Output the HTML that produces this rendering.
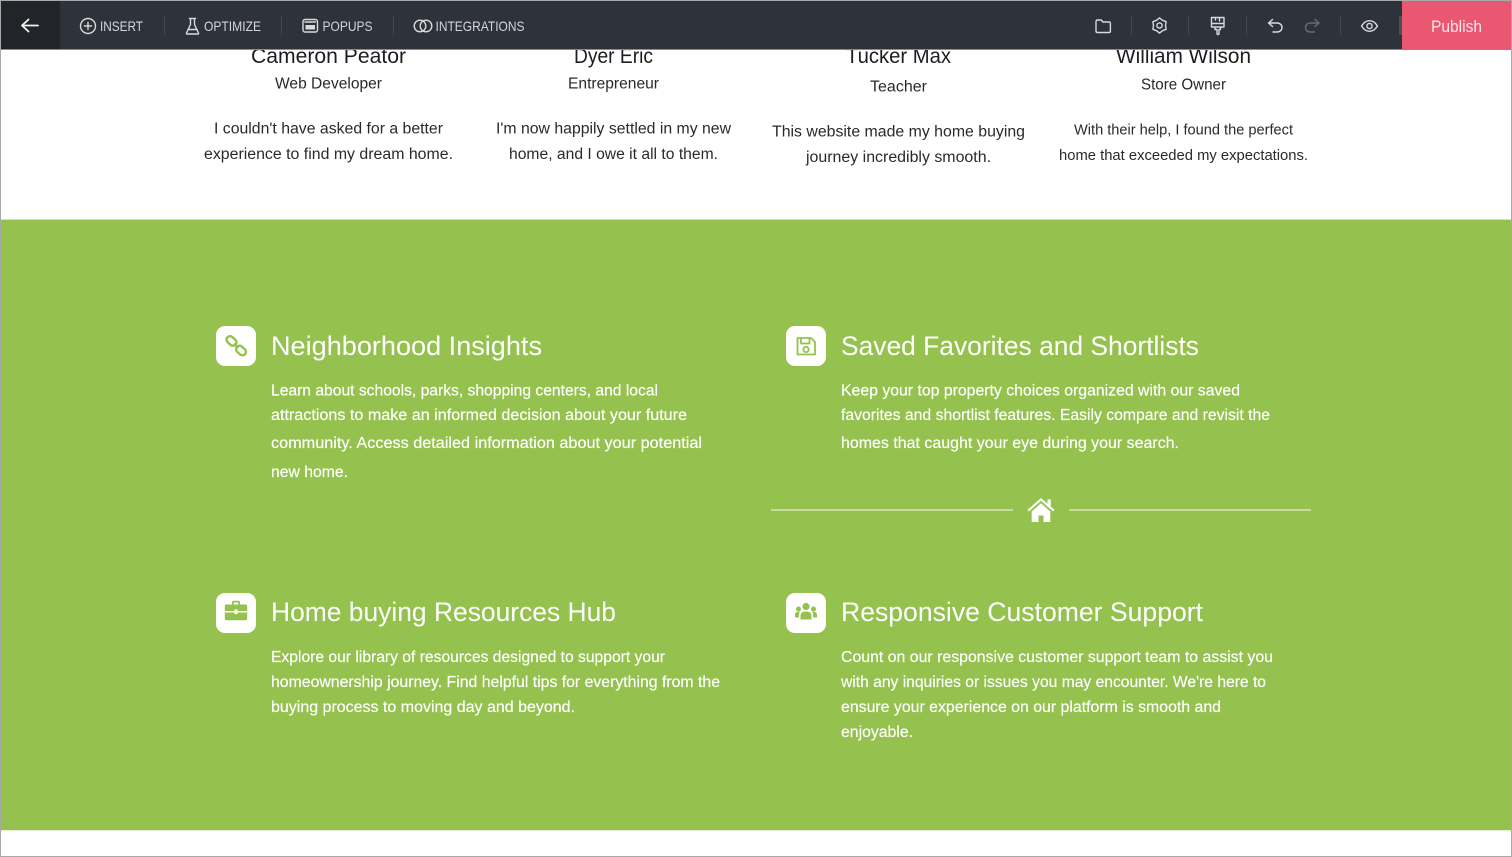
<!DOCTYPE html>
<html><head><meta charset="utf-8"><title>Page editor</title>
<style>
html,body{margin:0;padding:0;background:#fff;width:1512px;height:857px;overflow:hidden}
svg{display:block}
text{font-family:"Liberation Sans",sans-serif}
.n{font-size:21px;fill:#1d1d1f}
.r{font-size:15.5px;fill:#2a2a2a}
.q{font-size:15.5px;fill:#2a2a2a}
.h{font-size:26.5px;fill:#fff}
.b{font-size:15.5px;fill:#fff;stroke:#fff;stroke-width:.15}
.t{font-size:14px;fill:#d4d6d9}
.i{fill:none;stroke:#d8dadd;stroke-width:1.4;stroke-linecap:round;stroke-linejoin:round}
.g{fill:none;stroke:#95c24f;stroke-width:1.8;stroke-linecap:round;stroke-linejoin:round}
</style></head><body>
<svg width="1512" height="857" viewBox="0 0 1512 857" xmlns="http://www.w3.org/2000/svg">
<rect width="1512" height="857" fill="#fff"/>

<!-- testimonials -->
<text class="n" x="251" y="63" textLength="155" lengthAdjust="spacingAndGlyphs">Cameron Peator</text>
<text class="n" x="574" y="63" textLength="79" lengthAdjust="spacingAndGlyphs">Dyer Eric</text>
<text class="n" x="846" y="63" textLength="105" lengthAdjust="spacingAndGlyphs">Tucker Max</text>
<text class="n" x="1116" y="63" textLength="135" lengthAdjust="spacingAndGlyphs">William Wilson</text>
<text class="r" x="275" y="88.500" textLength="107" lengthAdjust="spacingAndGlyphs">Web Developer</text>
<text class="r" x="568" y="88.500" textLength="91" lengthAdjust="spacingAndGlyphs">Entrepreneur</text>
<text class="r" x="870" y="91.300" textLength="57" lengthAdjust="spacingAndGlyphs">Teacher</text>
<text class="r" x="1141" y="89.300" textLength="85" lengthAdjust="spacingAndGlyphs">Store Owner</text>
<text class="q" x="214" y="133.600" textLength="229" lengthAdjust="spacingAndGlyphs">I couldn't have asked for a better</text>
<text class="q" x="204" y="158.800" textLength="249" lengthAdjust="spacingAndGlyphs">experience to find my dream home.</text>
<text class="q" x="496" y="133.600" textLength="235" lengthAdjust="spacingAndGlyphs">I'm now happily settled in my new</text>
<text class="q" x="509" y="158.800" textLength="209" lengthAdjust="spacingAndGlyphs">home, and I owe it all to them.</text>
<text class="q" x="772" y="136.300" textLength="253" lengthAdjust="spacingAndGlyphs">This website made my home buying</text>
<text class="q" x="806" y="161.800" textLength="185" lengthAdjust="spacingAndGlyphs">journey incredibly smooth.</text>
<text class="q" x="1074" y="134.300" textLength="219" lengthAdjust="spacingAndGlyphs" style="font-size:14.6px">With their help, I found the perfect</text>
<text class="q" x="1059" y="159.800" textLength="249" lengthAdjust="spacingAndGlyphs" style="font-size:14.6px">home that exceeded my expectations.</text>

<!-- green band -->
<rect x="0" y="219" width="1512" height="1" fill="#d9d9d9"/>
<rect x="0" y="220" width="1512" height="610" fill="#95c24f"/>
<rect x="0" y="830" width="1512" height="1" fill="#e6f0d4"/>

<!-- icon tiles -->
<rect x="216" y="326" width="40" height="40" rx="9" fill="#fff"/>
<rect x="786" y="326" width="40" height="40" rx="9" fill="#fff"/>
<rect x="216" y="593" width="40" height="40" rx="9" fill="#fff"/>
<rect x="786" y="593" width="40" height="40" rx="9" fill="#fff"/>

<!-- link icon -->
<g fill="none" stroke="#95c24f" stroke-width="2.4">
<rect x="226" y="337.500" width="11" height="7" rx="3.500" transform="rotate(42 231.500 341)"/>
<rect x="235.500" y="347" width="11" height="7" rx="3.500" transform="rotate(42 241 350.500)"/>
</g>
<path d="M234 343.500l4.500 4.500" stroke="#95c24f" stroke-width="2" fill="none"/>

<!-- floppy icon -->
<path class="g" d="M797.500 338h13.500l4 4v12.500h-17.500z"/>
<path class="g" d="M801 338v5.500h8.500v-5.500"/>
<circle class="g" cx="806" cy="349.500" r="2.700"/>

<!-- briefcase -->
<path fill="#95c24f" d="M232 604.500v-2.200c0-.9.700-1.500 1.500-1.500h5c.9 0 1.500.6 1.500 1.500v2.200h5.500c1 0 1.700.7 1.700 1.700v4.800h-9.700v-1.600h-3v1.600h-9.700v-4.800c0-1 .7-1.700 1.700-1.700zm1.700 0h4.600v-2h-4.600zM224.800 612.500h9.700v1.600h3v-1.600h9.700v6c0 1-.7 1.700-1.700 1.700h-19c-1 0-1.700-.7-1.700-1.700z"/>

<!-- users -->
<g fill="#95c24f">
<circle cx="806" cy="606.500" r="3.600"/>
<circle cx="798.500" cy="609" r="2.500"/>
<circle cx="813.500" cy="609" r="2.500"/>
<path d="M800.500 619.500v-3.500c0-2.500 1.800-4.400 4-4.400h3c2.200 0 4 1.900 4 4.400v3.500z"/>
<path d="M795 617.500v-2.500c0-2 1.300-3.200 3-3.200h2c-.8 1-1.100 2.200-1.100 3.500v2.200zM817 617.500v-2.500c0-2-1.300-3.200-3-3.200h-2c.8 1 1.100 2.200 1.100 3.500v2.200z"/>
</g>

<!-- headings -->
<text class="h" x="271" y="355" textLength="271" lengthAdjust="spacingAndGlyphs">Neighborhood Insights</text>
<text class="h" x="841" y="355" textLength="358" lengthAdjust="spacingAndGlyphs">Saved Favorites and Shortlists</text>
<text class="h" x="271" y="621" textLength="345" lengthAdjust="spacingAndGlyphs">Home buying Resources Hub</text>
<text class="h" x="841" y="621" textLength="362" lengthAdjust="spacingAndGlyphs">Responsive Customer Support</text>

<!-- body -->
<text class="b" x="271" y="395.500" textLength="387" lengthAdjust="spacingAndGlyphs">Learn about schools, parks, shopping centers, and local</text>
<text class="b" x="271" y="420.200" textLength="416" lengthAdjust="spacingAndGlyphs">attractions to make an informed decision about your future</text>
<text class="b" x="271" y="448.200" textLength="431" lengthAdjust="spacingAndGlyphs">community. Access detailed information about your potential</text>
<text class="b" x="271" y="477.200" textLength="77" lengthAdjust="spacingAndGlyphs">new home.</text>

<text class="b" x="841" y="395.500" textLength="399" lengthAdjust="spacingAndGlyphs">Keep your top property choices organized with our saved</text>
<text class="b" x="841" y="420.200" textLength="429" lengthAdjust="spacingAndGlyphs">favorites and shortlist features. Easily compare and revisit the</text>
<text class="b" x="841" y="448.200" textLength="338" lengthAdjust="spacingAndGlyphs">homes that caught your eye during your search.</text>

<text class="b" x="271" y="661.800" textLength="394" lengthAdjust="spacingAndGlyphs">Explore our library of resources designed to support your</text>
<text class="b" x="271" y="686.800" textLength="449" lengthAdjust="spacingAndGlyphs">homeownership journey. Find helpful tips for everything from the</text>
<text class="b" x="271" y="712.200" textLength="304" lengthAdjust="spacingAndGlyphs">buying process to moving day and beyond.</text>

<text class="b" x="841" y="661.800" textLength="432" lengthAdjust="spacingAndGlyphs">Count on our responsive customer support team to assist you</text>
<text class="b" x="841" y="686.800" textLength="425" lengthAdjust="spacingAndGlyphs">with any inquiries or issues you may encounter. We're here to</text>
<text class="b" x="841" y="712.200" textLength="380" lengthAdjust="spacingAndGlyphs">ensure your experience on our platform is smooth and</text>
<text class="b" x="841" y="737.200" textLength="72" lengthAdjust="spacingAndGlyphs">enjoyable.</text>

<!-- divider -->
<rect x="771" y="509" width="242" height="2" fill="#c5dc9a"/>
<rect x="1069" y="509" width="242" height="2" fill="#c5dc9a"/>
<path fill="#fff" d="M1041 498l6.500 5.700v-4.200h3.300v7.100l3.700 3.300-1.400 1.500-12.100-10.700-12.100 10.700-1.400-1.500z"/>
<path fill="#fff" d="M1041 503.300l9.300 8.200v10.500h-6.800v-6.500h-5v6.500h-6.800v-10.500z"/>

<!-- toolbar -->
<rect x="0" y="0" width="1512" height="50" fill="#2e323a"/>
<rect x="0" y="0" width="60" height="50" fill="#212428"/>
<rect x="1402" y="0" width="110" height="50" fill="#e95771"/>
<rect x="0" y="49" width="1512" height="1" fill="#8a8c90"/>

<path d="M38 25.500H22M28.500 19.500l-6.500 6 6.500 6" fill="none" stroke="#f2f3f4" stroke-width="1.800" stroke-linecap="round" stroke-linejoin="round"/>

<circle class="i" cx="88" cy="26" r="7.500"/>
<path class="i" d="M88 22.500v7M84.500 26h7"/>
<text class="t" x="100" y="31" textLength="43" lengthAdjust="spacingAndGlyphs">INSERT</text>
<rect x="164" y="16" width="1" height="19" fill="#444850"/>

<path class="i" d="M189.500 18.500h6M190.500 18.500v6l-4 8.500c-.3.700.1 1 .8 1h10.400c.7 0 1.100-.3.800-1l-4-8.500v-6M188 29.500h9"/>
<text class="t" x="204" y="31" textLength="57" lengthAdjust="spacingAndGlyphs">OPTIMIZE</text>
<rect x="281" y="16" width="1" height="19" fill="#444850"/>

<rect class="i" x="303" y="19.500" width="14.500" height="12.500" rx="2"/>
<rect x="305.500" y="25" width="9.500" height="4.500" fill="#d8dadd"/>
<path class="i" d="M305 22h10.500"/>
<text class="t" x="322.500" y="31" textLength="50" lengthAdjust="spacingAndGlyphs">POPUPS</text>
<rect x="393" y="16" width="1" height="19" fill="#444850"/>

<circle class="i" cx="420" cy="26" r="5.800"/>
<circle class="i" cx="426" cy="26" r="5.800"/>
<text class="t" x="435.500" y="31" textLength="89" lengthAdjust="spacingAndGlyphs">INTEGRATIONS</text>

<!-- right icons -->
<path class="i" d="M1096 21.500c0-.8.600-1.500 1.400-1.500h3.800l1.800 2h6c.8 0 1.400.6 1.400 1.400v7.700c0 .8-.6 1.400-1.400 1.400h-11.600c-.8 0-1.400-.6-1.400-1.400z"/>
<rect x="1131" y="16" width="1" height="19" fill="#444850"/>
<path class="i" d="M1159.500 17.900L1162.500 20.300 1166.100 21.700 1165.500 25.500 1166.100 29.300 1162.500 30.700 1159.500 33.100 1156.500 30.700 1152.900 29.300 1153.500 25.500 1152.900 21.700 1156.500 20.300z"/>
<circle class="i" cx="1159.500" cy="25.500" r="2.600"/>
<rect x="1188" y="16" width="1" height="19" fill="#444850"/>
<path class="i" d="M1211.500 17.500h12.500v9.500h-12.500zM1211.500 23.500h12.500M1215.500 17.500v2.500M1219.500 17.500v3.500M1215 27v2.500h2v4c0 .7.500 1 1 1s1-.3 1-1v-4h1.500v-2.500"/>
<rect x="1246" y="16" width="1" height="19" fill="#444850"/>
<path class="i" d="M1272.500 19.500l-4 3.500 4 3.500M1268.500 23h8.500c3 0 5 2 5 4.500s-2 4.500-5 4.500h-4"/>
<path d="M1315 19.500l4 3.500-4 3.500M1319 23h-8.500c-3 0-5 2-5 4.500s2 4.500 5 4.500h4" fill="none" stroke="#666a72" stroke-width="1.400" stroke-linecap="round" stroke-linejoin="round"/>
<rect x="1340" y="16" width="1" height="19" fill="#444850"/>
<path class="i" d="M1361.500 26c2.200-3.500 5-5.300 8-5.300s5.800 1.800 8 5.300c-2.200 3.500-5 5.300-8 5.300s-5.800-1.800-8-5.300z"/>
<circle class="i" cx="1369.500" cy="26" r="2.600"/>
<rect x="1399" y="16" width="3" height="19" fill="#4a4e56"/>
<text x="1431" y="32" textLength="51" lengthAdjust="spacingAndGlyphs" style="font-size:16.500px;fill:#fbe6ea">Publish</text>

<!-- frame -->
<rect x="0.500" y="0.500" width="1511" height="856" fill="none" stroke="#a9a9a9" stroke-width="1"/>
</svg>
</body></html>
